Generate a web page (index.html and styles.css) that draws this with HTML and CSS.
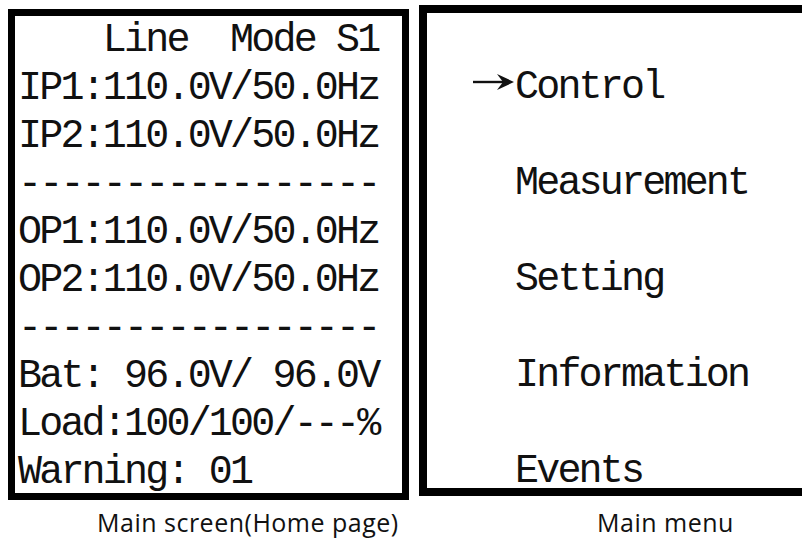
FILE: index.html
```html
<!DOCTYPE html>
<html lang="en">
<head>
<meta charset="utf-8">
<title>LCD screens</title>
<link rel="stylesheet" href="styles.css">
</head>
<body>
<main class="screens">
  <section class="panel panel-home">
    <div class="lcd lcd-home">
      <div class="lcd-line">    Line  Mode S1</div>
      <div class="lcd-line">IP1:110.0V/50.0Hz</div>
      <div class="lcd-line">IP2:110.0V/50.0Hz</div>
      <div class="lcd-line">-----------------</div>
      <div class="lcd-line">OP1:110.0V/50.0Hz</div>
      <div class="lcd-line">OP2:110.0V/50.0Hz</div>
      <div class="lcd-line">-----------------</div>
      <div class="lcd-line">Bat: 96.0V/ 96.0V</div>
      <div class="lcd-line">Load:100/100/---%</div>
      <div class="lcd-line">Warning: 01</div>
    </div>
    <p class="caption caption-home">Main screen(Home page)</p>
  </section>
  <section class="panel panel-menu">
    <div class="lcd lcd-menu">
      <div class="menu-item is-active"><svg class="cursor" width="42" height="26" viewBox="0 0 42 26" aria-hidden="true"><path d="M0 13H32" stroke="#111" stroke-width="2.4" fill="none"/><path d="M24 5L41 13L24 21L30 13Z" fill="#111"/></svg>Control</div>
      <div class="menu-item">Measurement</div>
      <div class="menu-item">Setting</div>
      <div class="menu-item">Information</div>
      <div class="menu-item">Events</div>
    </div>
    <p class="caption caption-menu">Main menu</p>
  </section>
</main>
</body>
</html>
```

FILE: styles.css
```css
html, body {
  margin: 0;
  padding: 0;
  background: #fff;
  width: 802px;
  height: 539px;
  overflow: hidden;
}

.screens {
  display: flex;
  gap: 10px;
  padding-left: 8px;
}

.panel {
  display: flex;
  flex-direction: column;
  flex-shrink: 0;
}

.panel-home {
  margin-top: 9px;
}

.panel-menu {
  margin-top: 5px;
}

.lcd {
  box-sizing: border-box;
  height: 491px;
  border: 7px solid #000;
  font-family: "Liberation Mono", monospace;
  font-size: 40px;
  letter-spacing: -2.8px;
  color: #111;
  overflow: hidden;
}

.lcd-line,
.menu-item {
  white-space: pre;
}

.lcd-home {
  width: 401px;
  padding: 1px 0 0 3px;
  line-height: 48px;
}

.lcd-menu {
  width: 420px;
  border-width: 8px;
  padding: 27px 0 0 46px;
  line-height: 96px;
}

.menu-item {
  padding-left: 42px;
}

.menu-item.is-active {
  padding-left: 0;
}

.cursor {
  display: inline-block;
  width: 42px;
  height: 26px;
  vertical-align: 3px;
}

.caption {
  margin: 0;
  font-family: "Open Sans", sans-serif;
  font-size: 25px;
  letter-spacing: 0.5px;
  line-height: 30px;
  color: #111;
}

.caption-home {
  margin-top: 7px;
  padding-left: 89px;
}

.caption-menu {
  margin-top: 11px;
  padding-left: 178px;
}
```
